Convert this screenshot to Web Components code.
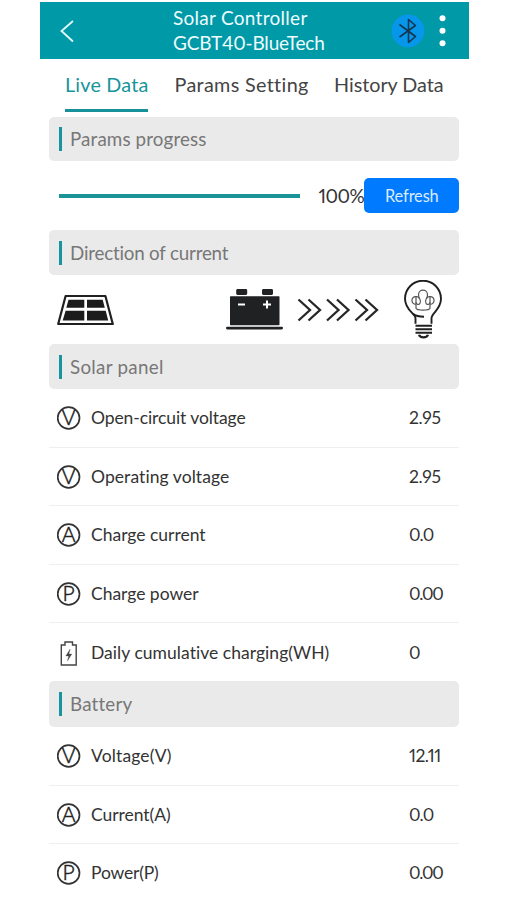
<!DOCTYPE html>
<html lang="en">
<head>
<meta charset="utf-8">
<title>Solar Controller</title>
<style>
html,body{margin:0;background:#fff}
body{width:507px;height:900px;overflow:hidden;font-family:Lato,"Noto Sans",sans-serif;color:#333}
</style>
</head>
<body>
<solar-app></solar-app>
<script>
const define = (name, html, init) => {
  const t = document.createElement('template');
  t.innerHTML = html;
  customElements.define(name, class extends HTMLElement {
    connectedCallback() {
      if (this.shadowRoot) return;
      this.attachShadow({mode: 'open'}).append(t.content.cloneNode(true));
      if (init) init(this, this.shadowRoot);
    }
  });
};

// A single line of text whose tracking is adjusted to fill a given width.
define('fit-text', `<style>:host{display:block;white-space:nowrap;line-height:22px;font-variant-numeric:proportional-nums}span{display:inline-block}</style><span></span>`,
  (el, root) => {
    const s = root.querySelector('span');
    s.textContent = el.getAttribute('text');
    const w = +el.getAttribute('w');
    el.style.width = w + 'px';
    const n = s.textContent.length;
    s.style.letterSpacing = ((w + .6 - s.getBoundingClientRect().width) / n).toFixed(3) + 'px';
  });

define('app-header', `<style>
:host{display:flex;box-sizing:border-box;height:57px;background:#0099a8;color:#effcfd;align-items:center;font-size:19px}
.back{margin-left:19px;width:16px;height:24px}
.title{margin-left:98.5px;width:152px;display:grid;gap:2.5px}
.bt{margin-left:66px;width:34px;height:34px}
.menu{margin-left:13px;width:8px;height:34px}
svg{display:block;flex:none}
</style>
<svg class="back" viewBox="0 0 16 24" fill="none" stroke="#e4fafa" stroke-width="1.8"><path d="M14 2 2.500 12 14 22.500"/></svg>
<div class="title"><fit-text text="Solar Controller" w="134"></fit-text><fit-text text="GCBT40-BlueTech" w="151"></fit-text></div>
<svg class="bt" viewBox="0 0 34 34"><circle cx="17" cy="17" r="16.4" fill="#0797ea"/><path d="M8.500 10.500 24.500 22.500 17.500 28.500V5.500L24.500 11.500 8.500 23" fill="none" stroke="#14364f" stroke-width="1.6" stroke-linejoin="round"/></svg>
<svg class="menu" viewBox="0 0 8 34" fill="#fff"><circle cx="4.500" cy="4.300" r="3"/><circle cx="4.500" cy="16.800" r="3"/><circle cx="4.500" cy="29.300" r="3"/></svg>`);

define('tab-item', `<style>
:host{display:flex;flex-direction:column;justify-content:space-between;box-sizing:border-box;height:53px;padding-top:13.5px;font-size:19.8px;color:#444}
:host([active]){color:#16959c}
i{display:block;height:3px}
:host([active]) i{background:#16919a}
</style><slot></slot><i></i>`);

define('section-bar', `<style>
:host{display:flex;align-items:center;box-sizing:border-box;background:#eaeaea;border-radius:5px;padding-left:10px;color:#777;font-size:18.8px}
i{width:3px;height:24px;background:#16959e;margin-right:8px}
</style><i></i><slot></slot>`);

define('progress-line', `<style>
:host{display:flex;align-items:center;height:69px;padding-left:10px}
.bar{width:241px;height:4px;background:#1a9496}
fit-text{margin-left:18.5px;font-size:19px}
.btn{margin-left:auto;width:95px;height:35.5px;border-radius:5px;background:#007aff;color:#dcecff;display:flex;align-items:center;justify-content:center;font-size:16.4px}
.btn fit-text{margin:0;font-size:inherit}
</style><div class="bar"></div><fit-text text="100%" w="45"></fit-text><div class="btn"><fit-text text="Refresh" w="53"></fit-text></div>`);

define('current-flow', `<style>
:host{display:flex;align-items:center;height:69px;padding-left:8px;box-sizing:border-box}
svg{display:block;flex:none}
.bat{margin-left:112px}.arr{margin-left:14px}.bulb{margin-left:24px}
</style>
<svg width="57" height="34" viewBox="0 0 57 34"><path d="M8.6 3H48.4L55.8 31H1.2Z" fill="#fff" stroke="#202020" stroke-width="2.2" stroke-linejoin="round"/><g fill="#1c1c1c"><path d="M11.5 6.7H27.3V14.8H9.3ZM30 6.7H45.7L47.8 14.8H30ZM8.6 17.8H27.3V27.6H5.7ZM30 17.8H48.7L51.2 27.6H30Z"/></g></svg>
<svg class="bat" width="57" height="42" viewBox="0 0 57 42"><g fill="#202123"><rect x="10.2" y="0" width="11" height="6" rx="1.4"/><rect x="36" y="0" width="11" height="6" rx="1.4"/><rect x="4" y="7.200" width="49.500" height="29" rx=".6"/><rect x="0" y="37.800" width="57" height="2.600" rx="1.300"/></g><path d="M12 15.500H19M37 15.500H45M41 11.500V19.500" stroke="#fff" stroke-width="2"/></svg>
<svg class="arr" width="83" height="26" viewBox="0 0 83 26" fill="none" stroke="#262626" stroke-width="2.3"><path d="M1.5 2.5 13 13 1.5 23.5M11.5 2.5 23 13 11.5 23.5M30 2.5 41.5 13 30 23.5M40 2.5 51.5 13 40 23.5M58.5 2.5 70 13 58.5 23.5M68.500 2.500 80 13 68.500 23.500"/></svg>
<svg class="bulb" width="38" height="60" viewBox="0 .8 38 60" fill="none" stroke="#202020" stroke-width="1.9">
<path d="M11.500 44.500V39C11.500 34.500 1 31 1 19.500A18 18 0 0 1 37 19.500C37 30 27.500 34 27.500 39V44.500"/><path d="M9 34.500C12 37 15 37.500 20 37.500"/>
<g stroke="#555" stroke-width="1.2"><path d="M16 24C18 20.500 14.500 20 14.500 15.500A4.500 4.500 0 0 1 23.500 15.500C23.500 20 20 20.500 22 24C23 26 26 25.500 26 23M16 24C15 26 12 25.500 12 23"/><path d="M12 17.500V29C13 31.500 25 31.500 26 29V17.500"/><path d="M12 25A3.500 3.800 0 1 1 12 17.500Q14 17 15 19M26 25A3.500 3.800 0 1 0 26 17.500Q24 17 23 19"/></g>
<path d="M11.500 46.500H28M11.500 50H28M11.500 53.500H28" stroke-width="2"/><path d="M15 55.500C16 59 23 59 24 55.500" stroke-width="2.200"/></svg>`);

define('data-row', `<style>
:host{display:grid;grid-template-columns:34px 318px 1fr;align-items:center;box-sizing:border-box;height:58.6px;padding:1px 0 0 8px;border-bottom:1px solid #efefef;font-size:17.5px}
:host([last]){height:57.6px;border-bottom:0}
.ring text{font:300 21px Lato,sans-serif;fill:#222;stroke:#222;stroke-width:.5px}
svg{display:block}
</style><div class="icon"></div><fit-text class="label"></fit-text><fit-text class="val"></fit-text>`,
  (el, root) => {
    const icon = root.querySelector('.icon'), k = el.getAttribute('icon');
    icon.innerHTML = k === 'charge'
      ? '<svg width="24" height="26" viewBox="0 0 24 26" fill="none" stroke="#444" stroke-width="1.400"><path d="M8 2H15.500V5H19.200V25H4.300V5H8Z"/><path d="M13.200 9 8.800 16H11.700L10.400 21 14.800 14H11.900Z" fill="#444" stroke-width=".3"/></svg>'
      : `<svg class="ring" width="24" height="32" viewBox="0 -4 24 32"><circle cx="11.600" cy="12" r="10.900" fill="none" stroke="#333" stroke-width="1.700"/><text x="11.600" y="19.300" text-anchor="middle">${k}</text></svg>`;
    for (const c of ['label', 'val']) {
      const f = document.createElement('fit-text');
      f.className = c;
      f.setAttribute('text', el.getAttribute(c));
      f.setAttribute('w', el.getAttribute(c + '-w'));
      root.querySelector('.' + c).replaceWith(f);
    }
  });

define('solar-app', `<style>
:host{display:block;width:429px;padding:2px 0 0 39.500px}
nav{display:flex;padding-left:25.500px}
nav :nth-child(2){margin-left:26.500px}nav :nth-child(3){margin-left:26.500px}
main{width:410px;margin:5px 0 0 9.500px}
.a{height:44px}.b{height:45px}.c{height:46px}
</style>
<app-header></app-header>
<nav><tab-item active><fit-text text="Live Data" w="83"></fit-text></tab-item><tab-item><fit-text text="Params Setting" w="133"></fit-text></tab-item><tab-item><fit-text text="History Data" w="109"></fit-text></tab-item></nav>
<main>
<section-bar class="a"><fit-text text="Params progress" w="136"></fit-text></section-bar>
<progress-line></progress-line>
<section-bar class="b"><fit-text text="Direction of current" w="158"></fit-text></section-bar>
<current-flow></current-flow>
<section-bar class="b"><fit-text text="Solar panel" w="93"></fit-text></section-bar>
<data-row icon="V" label="Open-circuit voltage" label-w="154" val="2.95" val-w="31"></data-row>
<data-row icon="V" label="Operating voltage" label-w="138" val="2.95" val-w="31"></data-row>
<data-row icon="A" label="Charge current" label-w="114" val="0.0" val-w="24"></data-row>
<data-row icon="P" label="Charge power" label-w="107" val="0.00" val-w="33"></data-row>
<data-row last icon="charge" label="Daily cumulative charging(WH)" label-w="238" val="0" val-w="9.5"></data-row>
<section-bar class="c"><fit-text text="Battery" w="61"></fit-text></section-bar>
<data-row icon="V" label="Voltage(V)" label-w="80" val="12.11" val-w="31"></data-row>
<data-row icon="A" label="Current(A)" label-w="79" val="0.0" val-w="24"></data-row>
<data-row last icon="P" label="Power(P)" label-w="67" val="0.00" val-w="33"></data-row>
</main>`);
</script>
</body>
</html>
